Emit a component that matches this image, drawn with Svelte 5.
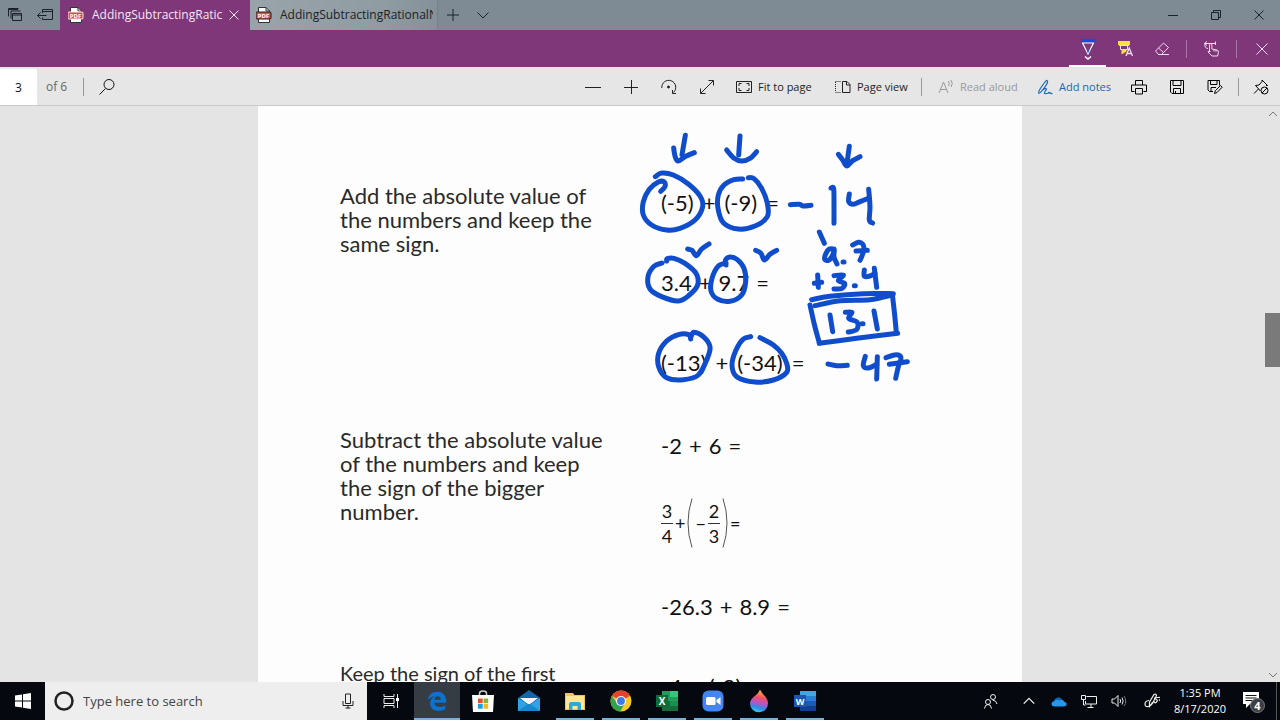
<script>
  let pageNumber = $state('3');
  let query = $state('');

  // Pen strokes, three units to one page pixel.
  const upper = [
    [[166,46],[161,75],[156,104]],
    [[131,84],[135,108],[144,123],[165,110],[193,98]],
    [[330,48],[326,105]],
    [[290,90],[310,113],[335,123],[360,115],[380,95]],
    [[658,79],[650,136]],
    [[625,103],[638,120],[650,138],[668,122],[690,110]],
    [[76,170],[95,159],[130,165],[175,192],[210,228],[218,260],[195,300],[150,325],[110,330],[65,315],[40,285],[40,245],[58,208],[85,186],[103,186],[105,200],[92,214]],
    [[338,177],[312,179],[282,195],[265,225],[264,265],[280,308],[325,327],[375,318],[412,290],[412,250],[395,205],[372,176],[355,173]],
    [[481,254],[508,253],[520,258],[543,256]],
    [[603,204],[611,206],[612,255],[612,310]],
    [[658,222],[656,245],[670,253],[690,245],[715,235]],
    [[716,208],[720,260],[718,300],[728,309]],
    [[568,336],[583,370]]
  ];
  const lower = [
    [[612,42],[598,42],[588,55],[584,72],[596,76],[608,60],[613,44],[612,66],[621,87]],
    [[639,81],[642,81]],
    [[668,30],[685,22],[698,27],[702,42],[697,60],[690,76]],
    [[678,48],[712,46]],
    [[553,145],[575,142]],
    [[563,120],[565,157]],
    [[612,122],[640,120],[625,137],[644,145],[636,160],[612,162]],
    [[673,152],[676,152]],
    [[703,105],[703,124],[720,123],[735,115]],
    [[733,100],[740,157]],
    [[545,194],[600,184],[700,176],[790,176]],
    [[555,212],[630,197],[720,194],[785,180]],
    [[540,210],[553,268],[568,324]],
    [[568,325],[680,310],[803,295]],
    [[787,178],[794,240],[799,293]],
    [[600,240],[608,290]],
    [[646,232],[666,232],[656,250],[682,262],[680,284],[655,291]],
    [[696,266],[699,266]],
    [[732,228],[742,282]],
    [[173,42],[186,46],[199,62],[215,42],[237,27]],
    [[377,46],[393,55],[403,75],[420,58],[440,46]],
    [[96,84],[72,94],[54,125],[60,162],[95,185],[145,198],[178,180],[203,150],[198,115],[165,85],[132,70],[112,71],[110,78]],
    [[288,84],[264,94],[246,130],[243,168],[262,192],[300,199],[335,180],[347,140],[342,100],[322,74],[300,66],[286,76],[288,90]],
    [[182,312],[176,299],[148,298],[110,318],[86,355],[86,395],[110,428],[160,434],[205,420],[232,370],[240,335],[220,305],[192,292],[184,303]],
    [[362,305],[340,312],[318,345],[306,390],[320,425],[375,441],[430,435],[470,412],[470,385],[455,355],[430,330],[390,308]],
    [[594,387],[620,392],[652,391]],
    [[706,364],[700,392],[715,399],[740,388]],
    [[742,365],[740,432]],
    [[768,368],[798,359],[813,368],[805,395],[797,430]],
    [[778,388],[832,380]]
  ];

  function smooth(p) {
    let d = `M${p[0][0]} ${p[0][1]}`;
    for (let i = 0; i < p.length - 1; i++) {
      const a = p[i - 1] ?? p[i], b = p[i], c = p[i + 1], e = p[i + 2] ?? c;
      const x1 = b[0] + (c[0] - a[0]) / 6, y1 = b[1] + (c[1] - a[1]) / 6;
      const x2 = c[0] - (e[0] - b[0]) / 6, y2 = c[1] - (e[1] - b[1]) / 6;
      d += `C${x1} ${y1} ${x2} ${y2} ${c[0]} ${c[1]}`;
    }
    return d;
  }
</script>

{#snippet pdf()}
  <svg class="pdf" viewBox="0 0 16 16" width="16" height="16" aria-hidden="true">
    <path d="M2.5 .5h7.5l3.500 3.500v11.500h-11z" fill="#fff" stroke="#333" />
    <path d="M10 .5v3.500h3.500" fill="none" stroke="#333" />
    <rect x="0" y="5" width="15" height="7" rx="1" fill="#e5484a" />
    <text x="7.500" y="10.700" text-anchor="middle" font-size="6" font-weight="700" fill="#fff">PDF</text>
  </svg>
{/snippet}

<div class="window">
  <header class="tabs">
    <button class="tool" aria-label="Tabs you've set aside">
      <svg viewBox="0 0 16 16" width="16" height="16"><path d="M1.500 9.500v-8h10M4 11.500v-7.500h9.500" /><path d="M5.500 6.500h9v7h-9zM5.500 8h9" /><path d="M2 2.500h9" /></svg>
    </button>
    <button class="tool" aria-label="Set these tabs aside">
      <svg viewBox="0 0 16 16" width="16" height="16"><path d="M5.500 6v-3.500h10v10h-10v-2M5.500 4.500h10M.5 8.500h9M3.500 5.500l-3 3 3 3" /></svg>
    </button>
    <div class="tab active">
      {@render pdf()}
      <span class="name">AddingSubtractingRatic</span>
      <button class="shut" aria-label="Close tab"><svg viewBox="0 0 12 12" width="12" height="12"><path d="M1.500 1.500l9 9M10.500 1.500l-9 9" /></svg></button>
    </div>
    <div class="tab">
      {@render pdf()}
      <span class="name">AddingSubtractingRationalN</span>
    </div>
    <button class="new" aria-label="New tab"><svg viewBox="0 0 14 14" width="14" height="14"><path d="M7 1v12M1 7h12" /></svg></button>
    <button class="new" aria-label="Show tab previews"><svg viewBox="0 0 14 14" width="14" height="14"><path d="M1.500 4.500l5.500 5.500 5.500-5.500" /></svg></button>
    <div class="controls">
      <button aria-label="Minimize"><svg viewBox="0 0 12 12" width="12" height="12"><path d="M1 6.500h10" /></svg></button>
      <button aria-label="Restore"><svg viewBox="0 0 12 12" width="12" height="12"><path d="M1.500 3.500h7v7h-7zM3.500 3.500v-2h7v7h-2" /></svg></button>
      <button aria-label="Close window"><svg viewBox="0 0 12 12" width="12" height="12"><path d="M1.500 1.500l9 9M10.500 1.500l-9 9" /></svg></button>
    </div>
  </header>

  <div class="inkbar">
    <button class="chosen" aria-label="Pen">
      <svg viewBox="0 0 16 24" width="16" height="24"><path d="M1 3h14v3.500h-14z" fill="#1d49d8" stroke="none" /><path d="M2 7h12M2.500 7l5.500 11 5.500-11" stroke-width="1.200" /><path d="M6.500 14h3l-1.500 3.500z" fill="#2b62f0" stroke="none" /><path d="M5 20.500l3 2.500 3-2.500" stroke-width="1.500" /></svg>
    </button>
    <button aria-label="Highlighter">
      <svg viewBox="0 0 18 18" width="18" height="18"><path d="M2 1h12v4h-12z" fill="#ffe03a" stroke="none" /><path d="M3 5.500h10M4.500 6v3.500h7v-3.500" /><path d="M5.500 9.500h5v2l-5 3z" fill="#ffe03a" stroke="none" /><path d="M10 16l3.200-8 3.300 8M11 13.500h4.500" stroke-width="1.300" /></svg>
    </button>
    <button aria-label="Eraser">
      <svg viewBox="0 0 16 16" width="16" height="16"><path d="M1.500 10l8-8 5 4.500-7 7h-3zM4.500 7l5 4.500M4 13.500h11" /></svg>
    </button>
    <i class="rule"></i>
    <button aria-label="Touch writing">
      <svg viewBox="0 0 18 18" width="18" height="18"><path d="M6.500 12v-7.500q1.200-1.800 2.400 0v4.500l5 1q2 .5 1.500 2.500l-.8 3.500h-5.600l-4-4q.5-2 2.500-.5M11 9.500v2M13 10v1.800" /><path d="M4 1.500l-2.500 2 2.500 2M1.500 3.500h11M12.500 1.500v3.500M2 4q-1 4 3 4.500" /></svg>
    </button>
    <i class="rule"></i>
    <button aria-label="Exit notes">
      <svg viewBox="0 0 14 14" width="14" height="14"><path d="M1.500 1.500l11 11M12.500 1.500l-11 11" /></svg>
    </button>
  </div>

  <div class="toolbar">
    <input class="page-number" aria-label="Page number" bind:value={pageNumber} />
    <span class="of">of 6</span>
    <i class="rule"></i>
    <button class="find" aria-label="Find"><svg viewBox="0 0 18 18" width="18" height="18"><circle cx="11" cy="6.500" r="5" /><path d="M7.500 10.500l-6 6" /></svg></button>
    <div class="actions">
      <button aria-label="Zoom out"><svg viewBox="0 0 16 16" width="16" height="16"><path d="M0 8.500h16" /></svg></button>
      <button aria-label="Zoom in"><svg viewBox="0 0 16 16" width="16" height="16"><path d="M1 8.500h14M8.500 1v14" /></svg></button>
      <button aria-label="Rotate"><svg viewBox="0 0 16 16" width="16" height="16"><path d="M.8 9a7 7 0 1 1 11.700 4.500M15 14.500h-3.500v-3.500" /><circle cx="7.500" cy="8" r="1" fill="currentColor" /></svg></button>
      <button aria-label="Full screen"><svg viewBox="0 0 16 16" width="16" height="16"><path d="M2 14l12-12M9.500 1.500h5v5M1.500 9.500v5h5" /></svg></button>
      <button class="wide fit"><svg viewBox="0 0 16 16" width="16" height="16"><path d="M.5 2.500h15v11h-15z" /><path d="M3 7v-2.500h2.500M10.500 4.500h2.500v2.500M13 9v2.500h-2.500M5.500 11.500h-2.500v-2.500" /></svg>Fit to page</button>
      <button class="wide view"><svg viewBox="0 0 16 16" width="16" height="16"><path d="M.5 2.500h6M.5 13.500h6M.5 3v10" stroke-dasharray="1 1" /><path d="M7.500 2.500h4.500l3 3v8h-7.500zM11.500 2.500v3.500h3.500" /></svg>Page view</button>
      <i class="rule"></i>
      <button class="wide read" disabled><svg viewBox="0 0 16 16" width="16" height="16"><path d="M1 14l4.500-11 4.500 11M2.500 10.500h6M10.500 2q1.500 2.500 0 5M13 1q2.500 3.500 0 7" /></svg>Read aloud</button>
      <button class="wide notes"><svg viewBox="0 0 16 16" width="16" height="16"><path d="M2 14.500q-1.500-1 3-7.500t5-5.500q2 1-2.500 7t-5.500 6M5 11.500q3-2.500 4-2t-1 3 1.500 2 2.500-1 3.500 1.500" stroke-width="1.200" /></svg>Add notes</button>
      <button aria-label="Print"><svg class="dark" viewBox="0 0 16 16" width="16" height="16"><path d="M4.500 6v-4.500h7v4.500M3.500 12.500h-3v-6.500h15v6.500h-3M4.500 9.500h7v5.500h-7z" /></svg></button>
      <button aria-label="Save"><svg class="dark" viewBox="0 0 16 16" width="16" height="16"><path d="M1.500 1.500h13v13h-11.500l-1.500-1.500zM4 1.500v5h8v-5M4.500 14v-4.500h7v4.500M6.500 12v2" /></svg></button>
      <button aria-label="Save as"><svg class="dark" viewBox="0 0 16 16" width="16" height="16"><path d="M6 12.500h-3.500l-1.500-1.500v-9.500h11.500v5M3.500 1.500v4h6.500v-4M4 12v-3.500h5M7.500 14.500l.8-2.700 5.200-5.300 1.700 1.700-5.200 5.300z" /></svg></button>
      <i class="rule tight"></i>
      <button aria-label="Pin the toolbar"><svg class="dark" viewBox="0 0 16 16" width="16" height="16"><path d="M1 14.500l4.500-4.500M2.500 6.500l3.500-.5 3-3.500v-1.500l5.500 5.500h-1.500M2.500 6.500l5 5.500" /><circle cx="11.500" cy="11.500" r="3.500" /><path d="M9 14l5-5" /></svg></button>
    </div>
  </div>

  <main>
    <article class="paper">
      <section class="add">
        <p>Add the absolute value of<br />the numbers and keep the<br />same sign.</p>
        <div class="problems">
          <div class="eq roomy"><span>(-5)</span><span>+</span><span>(-9)</span><span>=</span></div>
          <div class="eq"><span>3.4</span><span>+</span><span>9.7</span><span>=</span></div>
          <div class="eq roomy"><span>(-13)</span><span>+</span><span>(-34)</span><span>=</span></div>
        </div>
      </section>
      <section class="subtract">
        <p>Subtract the absolute value<br />of the numbers and keep<br />the sign of the bigger<br />number.</p>
        <div class="problems">
          <div class="eq"><span>-2</span><span>+</span><span>6</span><span>=</span></div>
          <div class="fractions">
            <span class="frac"><span>3</span><span>4</span></span>
            <span>+</span>
            <svg viewBox="0 0 6 50" width="6" height="50" aria-hidden="true"><path d="M5 .5q-8 24.500 0 49" /></svg>
            <span>−</span>
            <span class="frac"><span>2</span><span>3</span></span>
            <svg viewBox="0 0 6 50" width="6" height="50" aria-hidden="true"><path d="M1 .5q8 24.500 0 49" /></svg>
            <span>=</span>
          </div>
          <div class="eq"><span>-26.3</span><span>+</span><span>8.9</span><span>=</span></div>
        </div>
      </section>
      <section class="first">
        <p>Keep the sign of the first</p>
        <div class="problems">
          <div class="eq"><span>-4</span><span>–</span><span>(-8)</span></div>
        </div>
      </section>
      <svg class="ink" viewBox="0 0 2292 1728" aria-hidden="true">
        <g transform="translate(1116 42)">{#each upper as s}<path d={smooth(s)} />{/each}</g>
        <g transform="translate(1116 387)">{#each lower as s}<path d={smooth(s)} />{/each}</g>
      </svg>
    </article>
    <div class="scroll">
      <svg viewBox="0 0 10 6" width="10" height="6"><path d="M1 5l4-4 4 4" /></svg>
      <i class="thumb"></i>
      <svg class="down" viewBox="0 0 10 6" width="10" height="6"><path d="M1 1l4 4 4-4" /></svg>
    </div>
  </main>

  <footer>
    <button class="start" aria-label="Start"><svg viewBox="0 0 16 16" width="16" height="16"><path d="M0 2.500l7-1v6h-7zM8 1.300l8-1.200v7.400h-8zM0 8.500h7v6l-7-1zM8 8.500h8v7.400l-8-1.200z" fill="#fff" stroke="none" /></svg></button>
    <label class="search">
      <svg viewBox="0 0 20 20" width="20" height="20"><circle cx="10" cy="10" r="8.500" stroke-width="2.500" /></svg>
      <input type="text" placeholder="Type here to search" aria-label="Type here to search" bind:value={query} />
      <svg viewBox="0 0 12 16" width="12" height="16"><path d="M3.500 1h5v9.500h-5zM1 8v4.500h10v-4.500M6 12.500v3M3.500 15h5" /></svg>
    </label>
    <button class="taskview" aria-label="Task view"><svg viewBox="0 0 16 16" width="16" height="16"><path d="M1 1v2.500h10v-2.500M1 15v-2.500h10v2.500M1 5.500h10v5h-10zM14.500 1v14" /><path d="M13 5h3v3h-3z" fill="#fff" stroke="none" /></svg></button>
    <nav>
      <button class="current" aria-label="Edge"><svg viewBox="0 0 24 24" width="22" height="22"><path d="M2 11c1-6 5-9 10.500-9 6 0 9.500 4.500 9.500 9.500v2.500h-13c.3 3.200 3 4.500 6 4.500 2 0 4-.6 6-1.700v4.200c-2.500 1.200-5 1.700-7.500 1.700-5.500 0-9-3.200-9-8 0-3.500 2-6.500 5-8-3 .5-5.500 2-7.500 4.300zM9.200 10.500h7c0-2.500-1.200-3.800-3.400-3.800-2 0-3.200 1.500-3.600 3.800z" fill="#0b73cf" fill-rule="evenodd" stroke="none" /></svg></button>
      <button aria-label="Store"><svg viewBox="0 0 24 24" width="24" height="24"><path d="M8.500 7v-2.500q0-2.500 3.500-2.500t3.500 2.500v2.500" stroke="#ccc" stroke-width="1.500" /><path d="M1 6h22l-1 17h-20z" fill="#fff" stroke="none" /><g stroke="none"><path d="M7 9.500h4.700v4.700h-4.700z" fill="#e8502b" /><path d="M12.500 9.500h4.700v4.700h-4.700z" fill="#7fba28" /><path d="M7 15h4.700v4.700h-4.700z" fill="#16a0e0" /><path d="M12.500 15h4.700v4.700h-4.700z" fill="#f8b81c" /></g></svg></button>
      <button aria-label="Mail"><svg viewBox="0 0 24 24" width="24" height="24"><g stroke="none"><path d="M1 9l11-8 11 8v5h-22z" fill="#1267a8" /><path d="M3 9h18l-9 7z" fill="#f4f8fb" /><path d="M1 9l11 7 11-7v13h-22z" fill="#2ba5e5" /><path d="M1 22l10-7h2l10 7z" fill="#1688cf" /></g></svg></button>
      <button class="open" aria-label="File Explorer"><svg viewBox="0 0 24 24" width="24" height="24"><g stroke="none"><path d="M2 4h8l1.500 2h10.500v15h-20z" fill="#f1c653" /><path d="M3 7h18v13h-18z" fill="#ffe79a" /><path d="M6 21v-6q0-2 2-2h8q2 0 2 2v6h-3.500v-4h-5v4z" fill="#32a6d8" /></g></svg></button>
      <button class="open" aria-label="Chrome"><svg viewBox="0 0 24 24" width="24" height="24"><g stroke="none"><circle cx="12" cy="12" r="10.500" fill="#f9c928" /><path d="M12 12l-9.100-5.200a10.500 10.500 0 0 1 18.200 0z" fill="#e5432f" /><path d="M2.900 6.800a10.500 10.500 0 0 0 8.300 15.700l4.500-7.800-7.800-.5z" fill="#31a34f" /><circle cx="12" cy="12" r="5" fill="#fff" /><circle cx="12" cy="12" r="3.900" fill="#3e7de8" /></g></svg></button>
      <button class="open" aria-label="Excel"><svg viewBox="0 0 24 24" width="24" height="24"><g stroke="none"><path d="M7 2h16v20h-16z" fill="#1f9d5a" /><path d="M15 2h8v6h-8z" fill="#35c481" /><path d="M7 12h16v10h-16z" fill="#176b3c" /><path d="M15 12h8v5h-8z" fill="#198f50" /><path d="M1 6h12v12h-12z" fill="#0f6b38" /></g><text x="7" y="15.500" text-anchor="middle" font-size="10" font-weight="700" fill="#fff">X</text></svg></button>
      <button class="open" aria-label="Zoom"><svg viewBox="0 0 24 24" width="24" height="24"><g stroke="none"><rect x="1.500" y="1.500" width="21" height="21" rx="6" fill="#4585f0" /><rect x="5" y="8" width="9.500" height="8" rx="1.500" fill="#fff" /><path d="M15.500 11l4-3v8l-4-3z" fill="#fff" /></g></svg></button>
      <button class="open" aria-label="Paint 3D"><svg viewBox="0 0 24 24" width="24" height="24"><defs><linearGradient id="drop" x1="0.600" y1="0" x2="0.400" y2="1"><stop offset="0" stop-color="#ffc02e" /><stop offset=".35" stop-color="#f0506a" /><stop offset=".6" stop-color="#b455c8" /><stop offset=".8" stop-color="#2c8ee6" /><stop offset="1" stop-color="#38d0f0" /></linearGradient></defs><path d="M13 .5c2 5 8 8 8 14a9 8.700 0 0 1-18 0c0-6 8-8 10-14z" fill="url(#drop)" stroke="none" /></svg></button>
      <button class="open" aria-label="Word"><svg viewBox="0 0 24 24" width="24" height="24"><g stroke="none"><path d="M7 2h16v20h-16z" fill="#2b7cd3" /><path d="M7 2h16v5h-16z" fill="#41a5ee" /><path d="M7 12h16v10h-16z" fill="#185abd" /><path d="M7 17h16v5h-16z" fill="#103f91" /><path d="M1 6h12v12h-12z" fill="#1a56b5" /></g><text x="7" y="15.500" text-anchor="middle" font-size="9" font-weight="700" fill="#fff">W</text></svg></button>
    </nav>
    <div class="tray">
      <button class="people" aria-label="People"><svg viewBox="0 0 16 16" width="16" height="16"><circle cx="10" cy="4" r="2.500" /><circle cx="5" cy="9" r="2.500" /><path d="M1.500 15.500q.5-4 3.500-4t3.500 4M9.500 7q4 .5 4.500 4" /></svg></button>
      <button aria-label="Show hidden icons"><svg viewBox="0 0 16 16" width="14" height="14"><path d="M2 11l6-6 6 6" stroke-width="1.500" /></svg></button>
      <button aria-label="OneDrive"><svg viewBox="0 0 16 16" width="16" height="16"><g stroke="none"><path d="M3 9q-.2-3 2.500-4 3-1.800 5 1l3 3z" fill="#0f62b8" /><path d="M3.500 13.500q-3-.3-3-2.700 0-2.300 3-2.600 2-2.300 5-.7 3-2 4.500 1.200 2.700.2 2.700 2.400t-2.700 2.400z" fill="#2498ea" /></g></svg></button>
      <button aria-label="Network"><svg viewBox="0 0 16 16" width="16" height="16"><path d="M5.500 3.500h10v7.500h-11v-3M10 11v3M6.500 14.500h6M.5 2.500h4v4h-4zM2.500 6.500v5.500h2" /></svg></button>
      <button aria-label="Volume"><svg viewBox="0 0 16 16" width="16" height="16"><path d="M1 6h2.500l3.500-3.500v11l-3.500-3.500h-2.500zM9 6q1.200 2 0 4M11 4.500q2.300 3.500 0 7" /><path d="M13 3q3.500 5 0 10" stroke="#777" /></svg></button>
      <button class="pen" aria-label="Windows Ink"><svg viewBox="0 0 16 16" width="16" height="16"><path d="M5 7.500q-4 .5-4 3.500t3 2.500q3-.5 4.500-4.500M5.500 13.500v-4.500l4.500-7.500q2-1 2.500 1l-4 8zM10 8q.5 3 2.500 1t-1-3 2.500-1.500 1 3" stroke-width="1.200" /></svg></button>
      <time><span>1:35 PM</span><span>8/17/2020</span></time>
      <button class="notice" aria-label="Notifications"><svg viewBox="0 0 24 24" width="24" height="24"><path d="M2 3h16v12h-9l-4 4v-4h-3z" fill="#fff" stroke="none" /><path d="M4.500 6.500h11M4.500 9h11M4.500 11.500h7" stroke="#111" /><circle cx="16.500" cy="16.500" r="7" fill="#3c3f43" stroke="#777" /><text x="16.500" y="20.500" text-anchor="middle" font-size="11" font-weight="700" fill="#fff">4</text></svg></button>
      <i class="edge"></i>
    </div>
  </footer>
</div>

<style>
  :global(body) { margin: 0; overflow: hidden; }
  .window { height: 100vh; display: flex; flex-direction: column; font: 12px/16px "Open Sans", "Noto Sans", sans-serif; color: #111; background: #e4e4e4; }
  button { border: 0; padding: 0; margin: 0; background: none; color: inherit; font: inherit; display: flex; align-items: center; justify-content: center; flex: none; height: 100%; white-space: nowrap; }
  input { border: 0; outline: 0; padding: 0; margin: 0; font: inherit; color: inherit; }
  svg { fill: none; stroke: currentColor; flex: none; display: block; }
  svg text { stroke: none; font-family: "Open Sans", sans-serif; }
  i { flex: none; }

  .tabs { flex: none; height: 30px; display: flex; align-items: center; background: #7e8b95; color: #1b2229; }
  .tool { width: 30px; }
  .tab { box-sizing: border-box; height: 100%; width: 188px; display: flex; align-items: center; padding: 0 4px 0 6px; background: linear-gradient(90deg, #98a4a9, #8f9ca2 70%, #84919a); border-right: 1px solid #74818b; }
  .active { width: 190px; padding: 0 8px; background: #7f3779; color: #f4e6f3; border: 0; }
  .name { flex: 1; min-width: 0; margin-left: 8px; overflow: hidden; white-space: nowrap; }
  .shut { width: 16px; }
  .new { width: 30px; }
  .controls { margin-left: auto; display: flex; height: 100%; }
  .controls button { width: 43px; }

  .inkbar { flex: none; height: 37px; display: flex; align-items: center; justify-content: flex-end; background: #7f3779; color: #f0dcee; }
  .inkbar button { width: 37px; }
  .inkbar .chosen { box-sizing: border-box; border-bottom: 2px solid #fff; color: #fff; }
  .inkbar .rule { width: 1px; height: 18px; margin: 0 6px; background: #a875a4; }

  .toolbar { flex: none; box-sizing: border-box; height: 39px; padding-top: 2px; display: flex; align-items: center; background: #e6e6e6; border-bottom: 1px solid #c9c9c9; }
  .page-number { width: 37px; height: 36px; text-align: center; background: #fff; }
  .of { padding: 0 16px 0 9px; color: #666; }
  .rule { width: 1px; height: 18px; background: #999; }
  .find { width: 46px; }
  .actions { margin-left: auto; display: flex; align-items: center; height: 100%; font-size: 11px; color: #222; }
  .actions button { width: 38px; }
  .actions .rule { margin: 0 6px; }
  .actions .tight { margin: 0 3px 0 4px; }
  .actions .wide { justify-content: flex-start; gap: 6px; padding-left: 10px; box-sizing: border-box; width: 99px; }
  .actions .view { width: 90px; }
  .actions .read { color: #999; }
  .actions .notes { width: 93px; color: #1767b8; }
  .actions .dark { color: #000; }

  main { flex: 1; min-height: 0; display: grid; grid-template-columns: 1fr 15px; overflow: hidden; background: #e4e4e4; }
  .paper { position: relative; box-sizing: border-box; width: min(764px, 100%); padding: 78px 0 0 82px; margin-left: max(0px, calc(50vw - 382px)); background: #fdfdfd; font: 22px/24px Lato, sans-serif; overflow: hidden; }
  section { display: grid; grid-template-columns: 321px 1fr; }
  p { margin: 0; color: #2a2a2a; }
  .add { height: 244px; }
  .subtract { height: 233px; }
  .problems { display: flex; flex-direction: column; padding-top: 7px; gap: 56px; }
  .subtract .problems { padding-top: 6px; gap: 40px; }
  .first p { font-size: 20px; }
  .first .problems { padding-top: 14px; }
  .eq { display: flex; gap: 7px; }
  .roomy { gap: 9px; }
  .fractions { display: flex; align-items: center; gap: 2px; height: 50px; margin-bottom: 7px; font-size: 18px; }
  .fractions svg { stroke: #555; }
  .frac { display: flex; flex-direction: column; text-align: center; }
  .frac span { width: 12px; }
  .frac span + span { border-top: 1px solid #333; }
  .ink { position: absolute; left: 0; top: 0; width: 100%; stroke: #104dcc; stroke-width: 15; stroke-linecap: round; stroke-linejoin: round; }

  .scroll { display: flex; flex-direction: column; align-items: center; padding: 5px 0 4px; color: #777; }
  .thumb { width: 100%; height: 54px; margin-top: 196px; background: #7a7a7a; }
  .down { margin-top: auto; }

  footer { flex: none; height: 38px; display: flex; background: #05090f; color: #eee; }
  .start { width: 45px; }
  .search { width: 322px; box-sizing: border-box; display: flex; align-items: center; gap: 9px; padding: 0 13px 0 9px; background: #eee; color: #222; }
  .search input { flex: 1; min-width: 0; background: none; font-size: 13px; }
  .search input::placeholder { color: #444; opacity: 1; }
  .taskview { width: 47px; }
  nav { display: flex; }
  nav button { width: 46px; box-sizing: border-box; }
  .current { background: #353c44; border-bottom: 2px solid #76b2dc; padding-top: 2px; }
  .open { background: linear-gradient(#76b2dc, #76b2dc) center bottom / 38px 2px no-repeat; }
  .tray { margin-left: auto; display: flex; }
  .tray button { width: 30px; }
  .tray .people { width: 46px; }
  .tray .pen { width: 36px; }
  time { width: 60px; display: flex; flex-direction: column; align-items: center; justify-content: center; font-size: 11px; color: #fff; }
  .tray .notice { width: 46px; }
  .edge { width: 1px; margin-right: 3px; background: #555; }
</style>
